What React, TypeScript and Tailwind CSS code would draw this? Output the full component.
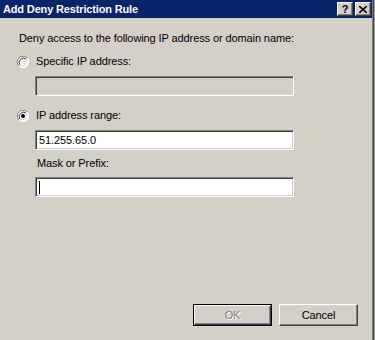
const font = "font-['Liberation_Sans',Arial,sans-serif]"

const Radio = ({ checked }: { checked?: boolean }) => (
    <svg width="12" height="12" viewBox="0 0 12 12" className="shrink-0">
        <circle cx="6" cy="6" r="5.5" fill="#ffffff" />
        <path d="M10 2 A5.5 5.5 0 0 0 2 10" fill="none" stroke="#808080" strokeWidth="1" />
        <path d="M9 3 A4.3 4.3 0 0 0 3 9" fill="none" stroke="#404040" strokeWidth="1" />
        <path d="M2 10 A5.5 5.5 0 0 0 10 2" fill="none" stroke="#ffffff" strokeWidth="1" />
        <path d="M3 9 A4.3 4.3 0 0 0 9 3" fill="none" stroke="#d4d0c8" strokeWidth="1" />
        {checked && <circle cx="6" cy="6" r="2" fill="#000000" />}
    </svg>
)

const Field = ({ value, disabled, caret }: { value?: string; disabled?: boolean; caret?: boolean }) => (
    <div
        className={`ml-[35px] w-[259px] h-[20px] flex items-center pl-[3px] border border-t-[#808080] border-l-[#808080] border-r-white border-b-white shadow-[inset_1px_1px_0_#404040,inset_-1px_-1px_0_#d4d0c8] text-[11px] text-black ${disabled ? "bg-[#d4d0c8]" : "bg-white"}`}
    >
        {value}
        {caret && <span className="w-px h-[13px] bg-black"></span>}
    </div>
)

const TitleButton = ({ children }: { children: React.ReactNode }) => (
    <div className="w-[16px] h-[14px] bg-[#d4d0c8] border border-t-white border-l-white border-r-[#404040] border-b-[#404040] shadow-[inset_-1px_-1px_0_#808080] flex items-center justify-center text-[11px] font-bold leading-none text-black">
        {children}
    </div>
)

export default function App() {
    return (
        <div className={`w-[375px] h-[340px] flex bg-[#d4d0c8] ${font}`}>
            <div className="w-[372px] h-full flex flex-col">
                <div className="h-[18px] bg-[#0a246a] flex items-center pl-[3px] pr-[1px]">
                    <span className="text-white font-bold text-[11px] tracking-[-0.15px]">Add Deny Restriction Rule</span>
                    <div className="ml-auto flex gap-[2px]">
                        <TitleButton>?</TitleButton>
                        <TitleButton>
                            <svg width="8" height="7" viewBox="0 0 8 7">
                                <path d="M0 0 L8 7 M8 0 L0 7" stroke="#000" strokeWidth="1.6" />
                            </svg>
                        </TitleButton>
                    </div>
                </div>

                <div className="flex-1 flex flex-col text-[11px] leading-[13px] text-black tracking-[-0.1px]">
                    <p className="mt-[14px] ml-[19px]">Deny access to the following IP address or domain name:</p>

                    <div className="mt-[10px] ml-[17px] flex items-center gap-[7px] h-[13px]">
                        <Radio />
                        <span>Specific IP address:</span>
                    </div>
                    <div className="mt-[8px]">
                        <Field disabled />
                    </div>

                    <div className="mt-[13px] ml-[17px] flex items-center gap-[7px] h-[13px]">
                        <Radio checked />
                        <span>IP address range:</span>
                    </div>
                    <div className="mt-[8px]">
                        <Field value="51.255.65.0" />
                    </div>

                    <p className="mt-[7px] ml-[37px]">Mask or Prefix:</p>
                    <div className="mt-[7px]">
                        <Field caret />
                    </div>

                    <div className="mt-auto mb-[14px] flex justify-end gap-[7px] pr-[14px]">
                        <div className="w-[79px] h-[22px] border border-black">
                            <div className="w-full h-full border border-t-white border-l-white border-r-[#404040] border-b-[#404040] shadow-[inset_-1px_-1px_0_#808080] flex items-center justify-center text-[#808080] [text-shadow:1px_1px_0_#ffffff]">
                                OK
                            </div>
                        </div>
                        <div className="w-[79px] h-[22px] border border-t-white border-l-white border-r-[#404040] border-b-[#404040] shadow-[inset_-1px_-1px_0_#808080] flex items-center justify-center">
                            Cancel
                        </div>
                    </div>
                </div>
            </div>
            <div className="w-px h-full bg-[#808080]"></div>
            <div className="w-px h-full bg-[#404040]"></div>
            <div className="w-px h-full bg-[#a0a0a0]"></div>
        </div>
    )
}
